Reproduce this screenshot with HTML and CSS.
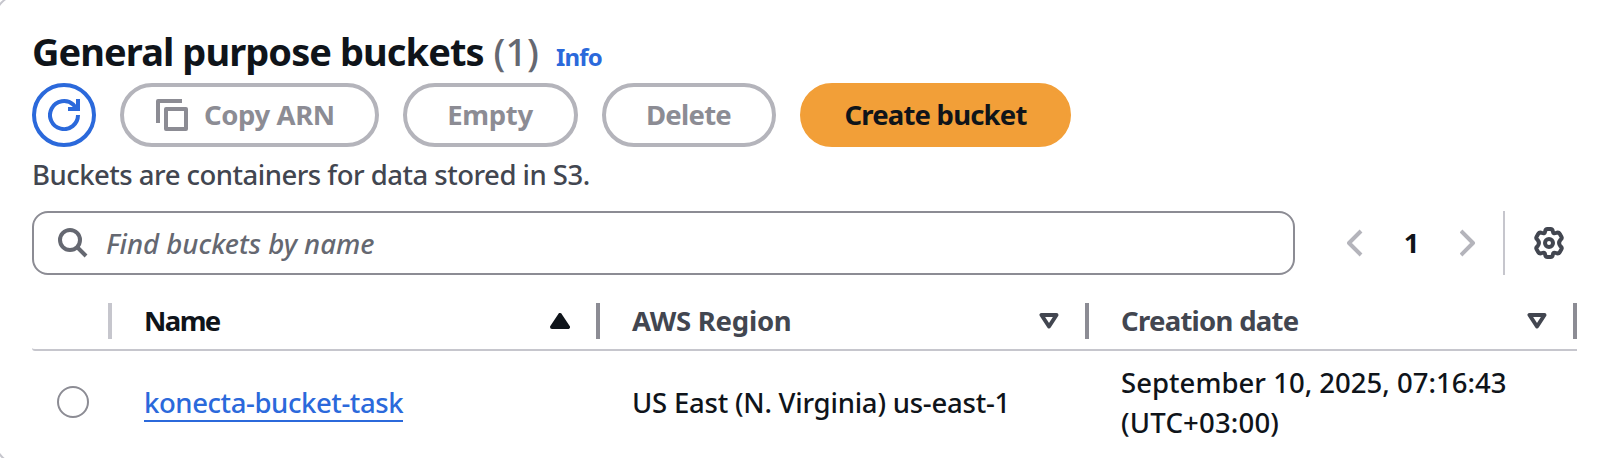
FILE: index.html
```html
<!DOCTYPE html>
<html lang="en">
<head>
<meta charset="utf-8">
<title>General purpose buckets</title>
<link rel="stylesheet" href="styles.css">
</head>
<body>
<main class="card">
  <header class="header">
    <h1 class="title"><span class="title-text">General purpose buckets</span> <span class="count">(1)</span></h1>
    <a class="info">Info</a>
  </header>
  <div class="actions">
    <button class="btn btn-refresh" aria-label="Refresh">
      <svg class="icon" viewBox="0 0 32 32" fill="none" stroke="currentColor" stroke-width="4"><path d="M30 16a14 14 0 1 1-4.500-10.200l3 3.200M30 0v10H20"/></svg>
    </button>
    <button class="btn btn-copy">
      <svg class="icon" viewBox="0 0 32 32" fill="none" stroke="currentColor" stroke-width="4" stroke-linejoin="round"><path d="M2 24V2h24"/><path d="M10 10h20v20H10z"/></svg>
      <span class="copy-text">Copy ARN</span>
    </button>
    <button class="btn btn-empty"><span>Empty</span></button>
    <button class="btn btn-delete"><span>Delete</span></button>
    <button class="btn btn-create"><span>Create bucket</span></button>
  </div>
  <p class="description"><span>Buckets are containers for data stored in S3.</span></p>
  <div class="tools">
    <div class="search">
      <svg class="search-icon" viewBox="0 0 30 30" fill="none" stroke="currentColor" stroke-width="4"><circle cx="12" cy="12" r="10"/><path d="M19 19l9 9"/></svg>
      <span class="placeholder">Find buckets by name</span>
    </div>
    <div class="pagination">
      <svg class="chevron" viewBox="0 0 16 28" fill="none" stroke="currentColor" stroke-width="4" stroke-linejoin="round"><path d="M14 2L2 14l12 12"/></svg>
      <span class="page">1</span>
      <svg class="chevron" viewBox="0 0 16 28" fill="none" stroke="currentColor" stroke-width="4" stroke-linejoin="round"><path d="M1 2l12 12L1 26"/></svg>
    </div>
    <div class="settings">
      <svg class="gear" viewBox="0 0 32 32" fill="none" stroke="currentColor" stroke-width="4" stroke-linejoin="round"><path d="M14.500 2h3q2 0 2.300 2.300.4 2.800 3.200 1.700 2.600-1.100 3.700.8l1.700 2.900q1 1.700-1 3.200-2.600 3.100 0 6.200 2 1.500 1 3.200l-1.700 2.900q-1.100 1.900-3.700.8-2.800-1.100-3.200 1.700-.3 2.300-2.300 2.300h-3q-2 0-2.300-2.300-.4-2.800-3.200-1.700-2.600 1.100-3.700-.8l-1.700-2.900q-1-1.700 1-3.200 2.600-3.100 0-6.200-2-1.500-1-3.200l1.700-2.900q1.100-1.900 3.700-.8 2.800 1.100 3.200-1.700Q12.500 2 14.500 2z"/><circle cx="16" cy="16" r="4"/></svg>
    </div>
  </div>
  <div class="table">
    <div class="row head">
      <div class="th th-select"></div>
      <div class="th th-sorted"><span class="h-name">Name</span>
        <svg class="sort" viewBox="0 0 20 16"><path d="M10 2l8 12H2z" fill="currentColor" stroke="currentColor" stroke-width="4" stroke-linejoin="round"/></svg></div>
      <div class="th"><span class="h-region">AWS Region</span>
        <svg class="sort" viewBox="0 0 20 16"><path d="M2.500 2h15L10 13.500z" fill="none" stroke="currentColor" stroke-width="4" stroke-linejoin="round"/></svg></div>
      <div class="th"><span class="h-date">Creation date</span>
        <svg class="sort" viewBox="0 0 20 16"><path d="M2.500 2h15L10 13.500z" fill="none" stroke="currentColor" stroke-width="4" stroke-linejoin="round"/></svg></div>
    </div>
    <div class="row body">
      <div class="td td-select"><span class="radio"></span></div>
      <div class="td"><a class="link">konecta-bucket-task</a></div>
      <div class="td"><span class="region">US East (N. Virginia) us-east-1</span></div>
      <div class="td"><span class="date-day">September 10, 2025, 07:16:43</span><br><span class="date-zone">(UTC+03:00)</span></div>
    </div>
  </div>
</main>
</body>
</html>
```
FILE: styles.css
```css
* { box-sizing: border-box; }
body {
  margin: 0;
  height: 458px;
  overflow: hidden;
  background: #fff;
  color: #0f141a;
  font-family: "Noto Sans", "Open Sans", sans-serif;
  font-size: 27.5px;
  font-weight: 500;
  line-height: 40px;
}
.card {
  width: 1640px;
  height: 475px;
  margin: -8px 0 0 -8px;
  padding: 33px 0 0 38px;
  border: 2px solid #c6c6cd;
  border-radius: 32px;
}
svg { display: block; flex: none; }
span, a { white-space: nowrap; }
.header { display: flex; align-items: baseline; height: 56px; gap: 17px; }
.title { margin: 0; font-size: 38px; line-height: 48px; font-weight: 700; }
.title-text { letter-spacing: -0.93px; }
.count { color: #656871; font-weight: 500; }
.info { color: #2b69db; font-size: 24px; font-weight: 700; letter-spacing: -0.8px; }
.actions { display: flex; gap: 24px; }
.btn {
  display: flex;
  align-items: center;
  justify-content: center;
  height: 64px;
  padding: 0;
  border: 4px solid #b4b4bb;
  border-radius: 32px;
  background: #fff;
  color: #8c8c94;
  font: inherit;
  font-weight: 700;
}
.icon { width: 32px; height: 32px; }
.btn-refresh { width: 64px; border-color: #2b69db; color: #2b69db; }
.btn-copy { width: 259px; padding-left: 32px; justify-content: flex-start; gap: 16px; letter-spacing: -0.4px; }
.btn-empty { width: 175px; padding-right: 1px; letter-spacing: -0.3px; }
.btn-delete { width: 174px; padding-right: 1px; letter-spacing: -0.75px; }
.btn-create { width: 271px; border-color: #f29f38; background: #f29f38; color: #0f141a; letter-spacing: -0.8px; }
.description { margin: 8px 0 16px; color: #424650; letter-spacing: -0.51px; }
.tools { display: flex; height: 64px; }
.search {
  display: flex;
  align-items: center;
  gap: 18px;
  width: 1263px;
  padding-left: 24px;
  border: 2px solid #8c8c94;
  border-radius: 16px;
  color: #656871;
}
.search-icon { width: 30px; height: 30px; }
.placeholder { padding-top: 2px; font-style: italic; }
.pagination { display: flex; align-items: center; justify-content: space-between; width: 129px; margin-left: 52px; color: #b4b4bb; }
.chevron { width: 16px; height: 28px; }
.page { color: #0f141a; font-weight: 700; }
.settings { display: flex; align-items: center; margin-left: 27px; padding-left: 28px; border-left: 2px solid #c6c6cd; color: #424650; }
.gear { width: 32px; height: 32px; }
.table { width: 1545px; margin-top: 28px; }
.row { display: grid; grid-template-columns: 80px 488px 489px 488px; }
.head { height: 48px; border-bottom: 2px solid #c6c6cd; border-bottom-left-radius: 3px; }
.th {
  display: flex;
  align-items: center;
  justify-content: space-between;
  height: 36px;
  padding: 0 26px 0 32px;
  border-right: 4px solid #8c8c94;
  color: #424650;
  font-weight: 700;
}
.th-select { padding: 0; border-color: #c6c6cd; }
.th-sorted { color: #0f141a; }
.h-name { letter-spacing: -1.6px; }
.h-region { letter-spacing: -0.25px; }
.h-date { letter-spacing: -0.72px; }
.sort { width: 20px; height: 16px; }
.body { height: 102px; align-items: center; }
.td { padding: 2px 0 0 32px; }
.td-select { padding: 0 0 0 25px; }
.radio { display: block; width: 32px; height: 32px; border: 2px solid #8c8c94; border-radius: 50%; }
.link { display: block; width: max-content; height: 39px; margin-bottom: 1px; border-bottom: 2px solid #2b69db; color: #2b69db; letter-spacing: -0.42px; }
.region { letter-spacing: -0.22px; }
.date-day { letter-spacing: 0.02px; }
.date-zone { letter-spacing: 0.2px; }
```
